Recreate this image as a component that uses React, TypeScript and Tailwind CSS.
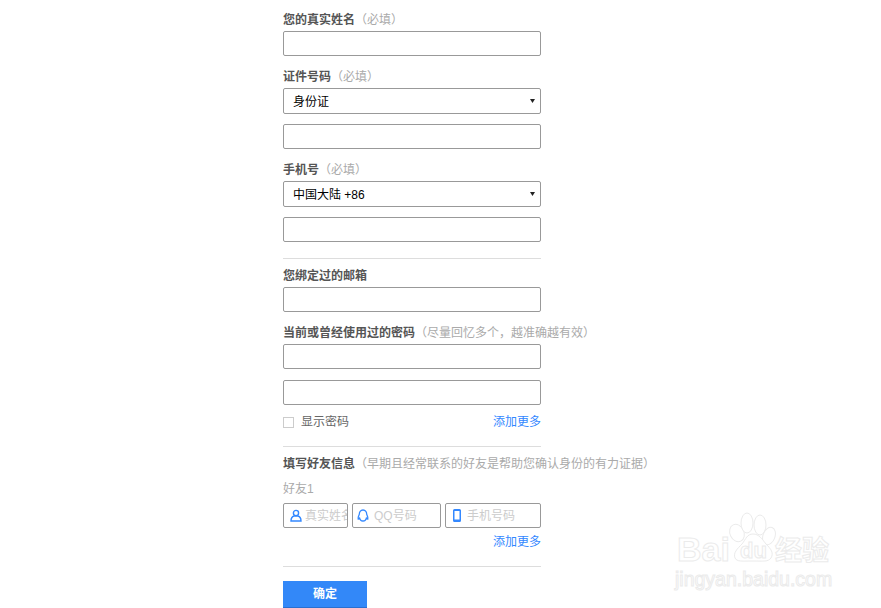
import React from 'react';

const Label = ({ title, hint, className = '' }: { title: string; hint?: string; className?: string }) => (
  <div className={`h-5 leading-[22px] text-xs whitespace-nowrap ${className}`}>
    <span className="font-bold text-[#555]">{title}</span>
    {hint && <span className="text-[#aaa]">{hint}</span>}
  </div>
);

const TextInput = ({ className = '' }: { className?: string }) => (
  <input className={`block w-full h-[25px] border border-[#999] rounded-[2px] outline-none ${className}`} />
);

const Select = ({ value, className = '' }: { value: string; className?: string }) => (
  <div className={`flex items-center justify-between h-[26px] border border-[#999] rounded-[2px] pl-[9px] pr-[5px] text-xs text-black ${className}`}>
    <span className="pt-[2px]">{value}</span>
    <svg width="5" height="4" viewBox="0 0 5 4"><path d="M0 0h5L2.5 4z" fill="#222" /></svg>
  </div>
);

const Divider = ({ className = '' }: { className?: string }) => <div className={`h-px bg-[#ddd] ${className}`} />;

const AddMore = () => <span className="text-xs text-[#3388ff]">添加更多</span>;

const UserIcon = () => (
  <svg width="12" height="13" viewBox="0 0 12 13" fill="none" stroke="#3388ff" strokeWidth="1.4" className="shrink-0">
    <circle cx="6" cy="4" r="2.6" />
    <path d="M1 12c0-3 1.600-4.600 3-5h4c1.400.4 3 2 3 5z" />
  </svg>
);

const QQIcon = () => (
  <svg width="12" height="14" viewBox="0 0 12 14" fill="none" stroke="#3388ff" strokeWidth="1.3" className="shrink-0">
    <path d="M6 1C3.400 1 2.300 3 2.300 5.200 1.400 7 .8 8.600 1.200 10.200c.6 0 1-.5 1.400-1 .2 1 .7 1.800 1.400 2.400.6.5 3.400.5 4 0 .7-.6 1.200-1.400 1.400-2.400.4.5.8 1 1.400 1 .4-1.600-.2-3.200-1.100-5C9.700 3 8.600 1 6 1z" />
  </svg>
);

const PhoneIcon = () => (
  <svg width="8" height="13" viewBox="0 0 8 13" className="shrink-0">
    <path fillRule="evenodd" d="M1.500 0h5A1.500 1.500 0 0 1 8 1.500v10A1.500 1.500 0 0 1 6.500 13h-5A1.500 1.500 0 0 1 0 11.500v-10A1.500 1.500 0 0 1 1.500 0zM1.500 2v8.500h5V2z" fill="#3388ff" />
  </svg>
);

const IconInput = ({ icon, text, className = '' }: { icon: React.ReactNode; text: string; className?: string }) => (
  <div className={`flex items-center h-[25px] border border-[#999] rounded-[2px] overflow-hidden whitespace-nowrap text-xs text-[#ccc] ${className}`}>
    {icon}
    <span>{text}</span>
  </div>
);

const Watermark = () => (
  <svg width="170" height="90" viewBox="0 0 170 90" fill="#fff" stroke="#ebebeb" strokeWidth="1" className="absolute left-[670px] top-[508px] pointer-events-none">
    <ellipse cx="67" cy="25" rx="7" ry="9" transform="rotate(-25 67 25)" />
    <ellipse cx="77" cy="15" rx="6" ry="10" />
    <ellipse cx="90" cy="17" rx="6" ry="10" />
    <ellipse cx="99" cy="28" rx="6" ry="9" transform="rotate(20 99 28)" />
    <path d="M83 26c6 0 9 5 13 10 5 5 8 9 5 14-3 4-7 3-18 3s-16 1-18-3c-2-5 2-9 7-14 4-5 5-10 11-10z" />
    <text x="7" y="53" fontFamily="'Liberation Sans', sans-serif" fontSize="34" fontWeight="700">Bai</text>
    <text x="70" y="50" fontFamily="'Liberation Sans', sans-serif" fontSize="22" fontWeight="700">du</text>
    <text x="105" y="52" fontFamily="'Noto Sans CJK SC', sans-serif" fontSize="27" fontWeight="700">经验</text>
    <text x="5" y="78" fontFamily="'Liberation Sans', sans-serif" fontSize="19.500">jingyan.baidu.com</text>
  </svg>
);

export default function App() {
  return (
    <div className="relative h-[608px] overflow-hidden bg-white font-['Liberation_Sans','Noto_Sans_CJK_SC',sans-serif]">
      <div className="ml-[283px] w-[258px] pt-[9px]">
        <Label title="您的真实姓名" hint="（必填）" />
        <TextInput className="mt-[2px]" />

        <Label title="证件号码" hint="（必填）" className="mt-[10px]" />
        <Select value="身份证" className="mt-[2px]" />
        <TextInput className="mt-[10px]" />

        <Label title="手机号" hint="（必填）" className="mt-[10px]" />
        <Select value="中国大陆 +86" className="mt-[2px]" />
        <TextInput className="mt-[10px]" />

        <Divider className="mt-4" />

        <Label title="您绑定过的邮箱" className="mt-[6px]" />
        <TextInput className="mt-[2px]" />

        <Label title="当前或曾经使用过的密码" hint={'（尽量回忆多个\uFF0C越准确越有效）'} className="mt-[10px]" />
        <TextInput className="mt-[2px]" />
        <TextInput className="mt-[11px]" />

        <div className="flex items-center justify-between h-5 mt-[7px]">
          <div className="flex items-center text-xs text-[#666]">
            <span className="w-[11px] h-[11px] border border-[#ccc]" />
            <span className="ml-[7px]">显示密码</span>
          </div>
          <AddMore />
        </div>

        <Divider className="mt-[14px]" />

        <Label title="填写好友信息" hint="（早期且经常联系的好友是帮助您确认身份的有力证据）" className="mt-[6px]" />
        <div className="h-5 leading-[22px] mt-[5px] text-xs text-[#aaa]">好友1</div>

        <div className="flex gap-1 mt-[5px]">
          <IconInput icon={<UserIcon />} text="真实姓名" className="w-[65px] pl-[6px] gap-[3px]" />
          <IconInput icon={<QQIcon />} text="QQ号码" className="w-[89px] pl-[4px] gap-[5px]" />
          <IconInput icon={<PhoneIcon />} text="手机号码" className="w-[96px] pl-[7px] gap-[6px]" />
        </div>

        <div className="flex justify-end items-center h-5 mt-[3px] pt-[2px]">
          <AddMore />
        </div>

        <Divider className="mt-[15px]" />

        <button className="block w-[84px] h-[27px] mt-[14px] bg-[#3388f8] border-b border-[#2a6fd0] text-xs font-bold text-white">确定</button>
      </div>
      <Watermark />
    </div>
  );
}
